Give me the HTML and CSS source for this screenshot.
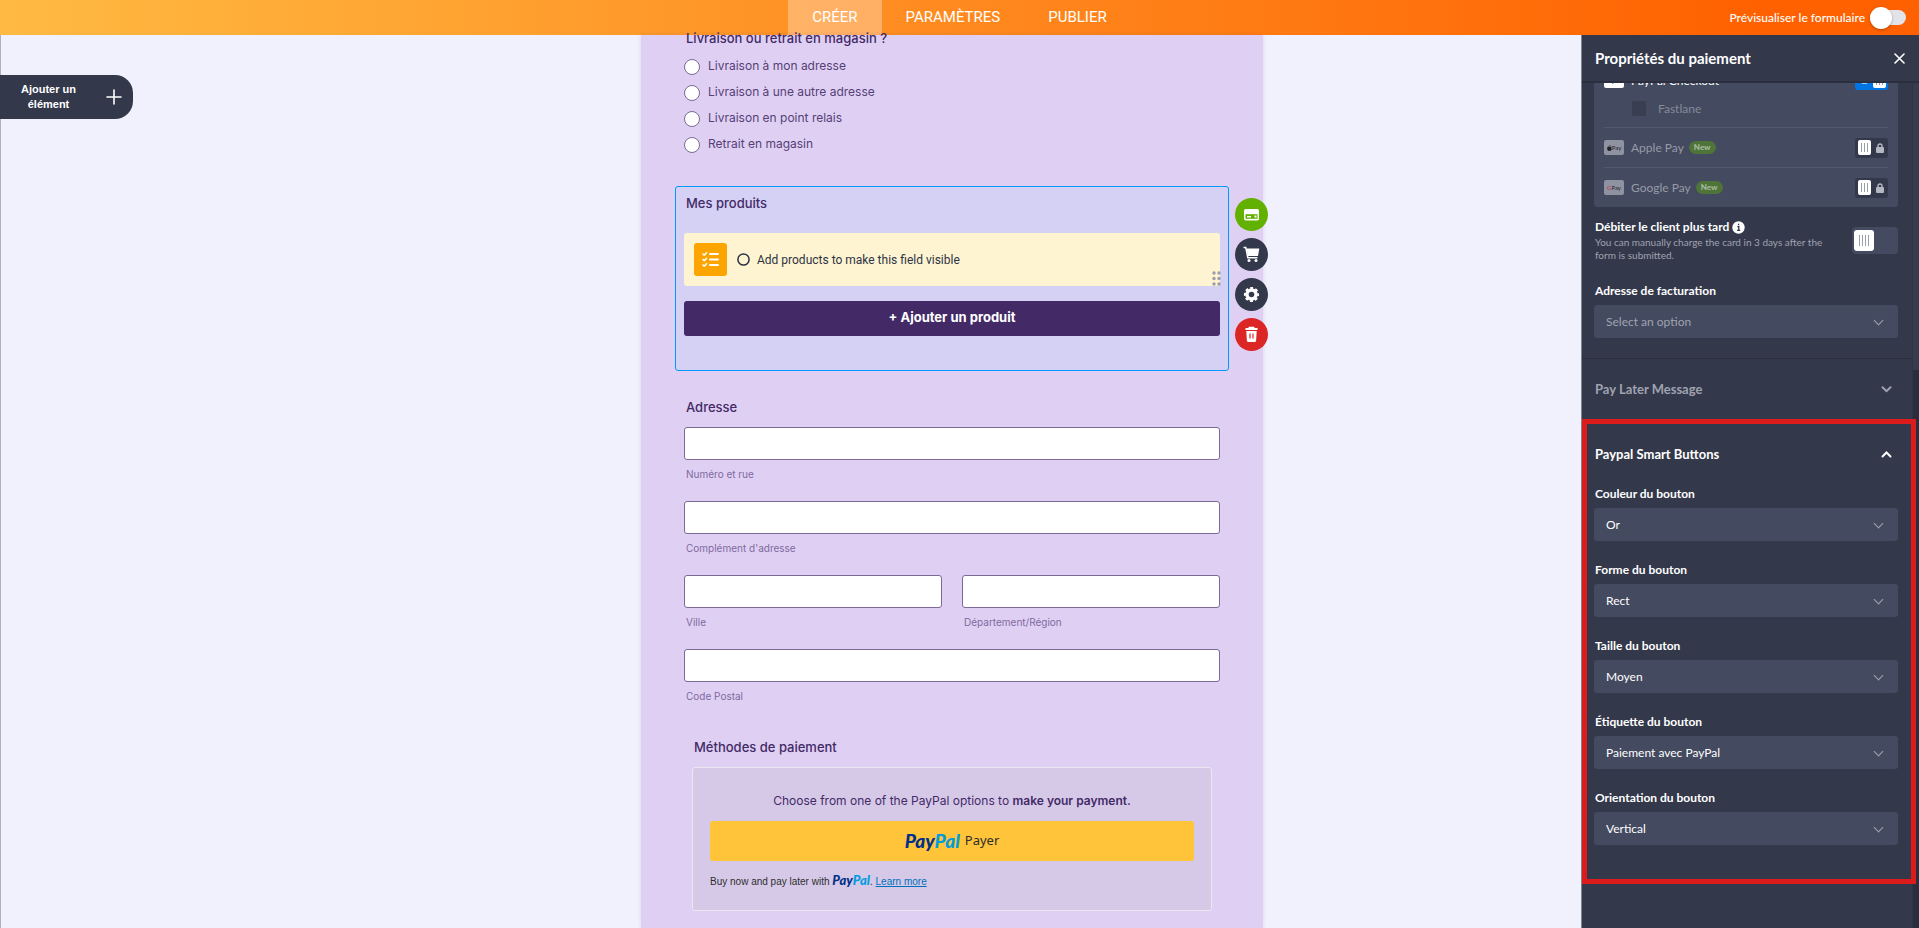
FILE: index.html
```html
<!DOCTYPE html>
<html lang="fr">
<head>
    <meta charset="UTF-8">
    <meta name="viewport" content="width=device-width, initial-scale=1.0">
    <title>Propriétés du paiement</title>
    <link rel="stylesheet" href="styles.css">
</head>
<body>
    <header class="topbar">
        <nav class="tabs">
            <a class="tab active" href="#creer">CRÉER</a>
            <a class="tab" href="#parametres">PARAMÈTRES</a>
            <a class="tab" href="#publier">PUBLIER</a>
        </nav>
        <label class="preview">
            Prévisualiser le formulaire
            <input type="checkbox" class="preview-switch">
        </label>
    </header>

    <main class="workspace">
        <button class="add-element" type="button">
            <span class="add-text">Ajouter un élément</span>
            <svg width="16" height="16" viewBox="0 0 16 16" fill="none" stroke="#fff" stroke-width="1.600" stroke-linecap="round"><path d="M8 1v14M1 8h14"/></svg>
        </button>

        <form class="form">
            <fieldset class="choices">
                <legend class="question">Livraison ou retrait en magasin ?</legend>
                <label class="choice"><input type="radio" name="livraison">Livraison à mon adresse</label>
                <label class="choice"><input type="radio" name="livraison">Livraison à une autre adresse</label>
                <label class="choice"><input type="radio" name="livraison">Livraison en point relais</label>
                <label class="choice"><input type="radio" name="livraison">Retrait en magasin</label>
            </fieldset>

            <!-- Bloc sélectionné -->
            <section class="products">
                <h2 class="question">Mes produits</h2>
                <div class="notice">
                    <span class="notice-icon">
                        <svg width="17" height="17" viewBox="0 0 17 17" fill="none" stroke="#fff" stroke-width="2" stroke-linecap="round" stroke-linejoin="round"><path stroke-width="1.6" d="M1 3l1.200 1.200L4.500 1.800M1 8.500l1.200 1.200L4.500 7.300M1 14l1.200 1.200 2.300-2.400"/><path d="M8 3h8M8 8.500h8M8 14h8"/></svg>
                    </span>
                    <svg width="13" height="13" viewBox="0 0 13 13" fill="none" stroke="#2c3345" stroke-width="1.500"><circle cx="6.500" cy="6.500" r="5.600"/></svg>
                    <span>Add products to make this field visible</span>
                    <svg class="drag" width="9" height="15" viewBox="0 0 9 15" fill="#9c9daa"><circle cx="2" cy="2" r="1.700"/><circle cx="7" cy="2" r="1.700"/><circle cx="2" cy="7.500" r="1.700"/><circle cx="7" cy="7.500" r="1.700"/><circle cx="2" cy="13" r="1.700"/><circle cx="7" cy="13" r="1.700"/></svg>
                </div>
                <button class="add-product" type="button">+ Ajouter un produit</button>
                <div class="actions">
                    <button class="action green" type="button" aria-label="Paiement">
                        <svg width="17" height="17" viewBox="0 0 17 17"><rect x="1" y="3" width="15" height="11.500" rx="1.800" fill="#fff"/><path fill="#62b100" d="M2.500 8.200h12v4.600h-12z"/><path fill="#fff" d="M4 10h4v1.600H4zM11.500 9.500h2v2h-2z"/></svg>
                    </button>
                    <button class="action" type="button" aria-label="Produits">
                        <svg width="17" height="17" viewBox="0 0 17 17"><path d="M.5 1.500h2.300l2 10.200h9.700" fill="none" stroke="#fff" stroke-width="1.500"/><path d="M3.300 2.500h13L15 10H5z" fill="#fff"/><circle cx="6" cy="14.500" r="1.500" fill="#fff"/><circle cx="13" cy="14.500" r="1.500" fill="#fff"/></svg>
                    </button>
                    <button class="action" type="button" aria-label="Réglages">
                        <svg width="17" height="17" viewBox="0 0 17 17" fill="none" stroke="#fff"><circle cx="8.500" cy="8.500" r="4.500" stroke-width="3.400"/><circle cx="8.500" cy="8.500" r="6.600" stroke-width="2" stroke-dasharray="2.900 2.284" stroke-dashoffset="1.450"/></svg>
                    </button>
                    <button class="action red" type="button" aria-label="Supprimer">
                        <svg width="17" height="17" viewBox="0 0 17 17"><path fill="#fff" d="M6 .800h5l.8 1.200H14.500v2h-12V2h2.700zM3.300 5h10.400l-.6 9.800a1.500 1.500 0 0 1-1.500 1.300H5.400a1.500 1.500 0 0 1-1.500-1.300z"/><path d="M7 7.500v5M10 7.500v5" stroke="#dc2626" stroke-width="1.200"/></svg>
                    </button>
                </div>
            </section>

            <section class="address">
                <h2 class="question">Adresse</h2>
                <div class="address-grid">
                    <label class="field wide"><input type="text"><span>Numéro et rue</span></label>
                    <label class="field wide"><input type="text"><span>Complément d'adresse</span></label>
                    <label class="field"><input type="text"><span>Ville</span></label>
                    <label class="field"><input type="text"><span>Département/Région</span></label>
                    <label class="field wide"><input type="text"><span>Code Postal</span></label>
                </div>
            </section>

            <section class="payment">
                <h2 class="question">Méthodes de paiement</h2>
                <div class="payment-box">
                    <p class="payment-hint">Choose from one of the PayPal options to <strong>make your payment.</strong></p>
                    <button class="paypal-button" type="button"><span class="paypal">Pay<span>Pal</span></span> Payer</button>
                    <p class="pay-later">Buy now and pay later with <span class="paypal small">Pay<span>Pal</span></span>. <a href="#learn">Learn more</a></p>
                </div>
            </section>
        </form>

        <aside class="panel">
            <div class="panel-header">
                <h1>Propriétés du paiement</h1>
                <button class="close" type="button" aria-label="Fermer">
                    <svg width="11" height="11" viewBox="0 0 11 11" stroke="#fff" stroke-width="1.600" stroke-linecap="round"><path d="M1 1l9 9M10 1l-9 9"/></svg>
                </button>
            </div>
            <div class="panel-body">
                <div class="panel-content">
                    <div class="general">
                        <div class="methods">
                            <label class="method on">
                                <span class="card-icon"><span class="paypal">Pay<span>Pal</span></span></span>
                                <span class="method-name">PayPal Checkout</span>
                                <input type="checkbox" class="mini-switch" checked>
                            </label>
                            <label class="fastlane"><input type="checkbox" disabled>Fastlane</label>
                            <label class="method">
                                <span class="card-icon">
                                    <svg width="5" height="6" viewBox="0 0 10 12" fill="#22232b"><path d="M7 0c0 1.500-1 2.600-2.300 2.700C4.600 1.300 5.600.2 7 0zM9.500 8.500C9 10 8 11.800 6.900 11.800c-.7 0-1-.4-1.800-.4s-1.200.4-1.800.4C2 11.800.3 9.300.3 6.800c0-2.300 1.400-3.600 2.800-3.600.9 0 1.500.5 2.100.5s1.300-.6 2.400-.6c.7 0 1.500.4 2 1.100-1.900 1.100-1.500 3.600-.1 4.300z"/></svg>Pay
                                </span>
                                <span class="method-name">Apple Pay</span><span class="badge">New</span>
                                <span class="locked">
                                    <i class="knob"></i>
                                    <svg width="8" height="10" viewBox="0 0 8 10"><rect y="4" width="8" height="6" rx="1" fill="#b4b7c2"/><path d="M2 4.500V3a2 2 0 0 1 4 0v1.500" fill="none" stroke="#b4b7c2" stroke-width="1.400"/></svg>
                                </span>
                            </label>
                            <label class="method">
                                <span class="card-icon google"><b>G</b>Pay</span>
                                <span class="method-name">Google Pay</span><span class="badge">New</span>
                                <span class="locked">
                                    <i class="knob"></i>
                                    <svg width="8" height="10" viewBox="0 0 8 10"><rect y="4" width="8" height="6" rx="1" fill="#b4b7c2"/><path d="M2 4.500V3a2 2 0 0 1 4 0v1.500" fill="none" stroke="#b4b7c2" stroke-width="1.400"/></svg>
                                </span>
                            </label>
                        </div>

                        <div class="charge">
                            <div>
                                <label class="prop-label" for="charge-later">Débiter le client plus tard
                                    <svg width="13" height="13" viewBox="0 0 13 13"><circle cx="6.500" cy="6.500" r="6.200" fill="#fff"/><path d="M5.300 5.600h1.500v3.600M5 9.400h3.200M6.600 2.800v1.500" fill="none" stroke="#33384b" stroke-width="1.300"/></svg>
                                </label>
                                <p class="charge-hint">You can manually charge the card in 3 days after the form is submitted.</p>
                            </div>
                            <input type="checkbox" id="charge-later" class="switch">
                        </div>

                        <div class="prop">
                            <label class="prop-label" for="billing">Adresse de facturation</label>
                            <div class="select muted"><select id="billing"><option>Select an option</option></select></div>
                        </div>
                    </div>

                    <button class="section-head later" type="button">Pay Later Message
                        <svg width="11" height="7" viewBox="0 0 11 7" fill="none" stroke="currentColor" stroke-width="2" stroke-linecap="round"><path d="M1.500 1.200l4 4 4-4"/></svg>
                    </button>

                    <section class="smart">
                        <button class="section-head" type="button">Paypal Smart Buttons
                            <svg width="11" height="7" viewBox="0 0 11 7" fill="none" stroke="currentColor" stroke-width="2" stroke-linecap="round"><path d="M1.500 5.500l4-4 4 4"/></svg>
                        </button>
                        <div class="prop">
                            <label class="prop-label" for="color">Couleur du bouton</label>
                            <div class="select"><select id="color"><option>Or</option></select></div>
                        </div>
                        <div class="prop">
                            <label class="prop-label" for="shape">Forme du bouton</label>
                            <div class="select"><select id="shape"><option>Rect</option></select></div>
                        </div>
                        <div class="prop">
                            <label class="prop-label" for="size">Taille du bouton</label>
                            <div class="select"><select id="size"><option>Moyen</option></select></div>
                        </div>
                        <div class="prop">
                            <label class="prop-label" for="tag">Étiquette du bouton</label>
                            <div class="select"><select id="tag"><option>Paiement avec PayPal</option></select></div>
                        </div>
                        <div class="prop">
                            <label class="prop-label" for="layout">Orientation du bouton</label>
                            <div class="select"><select id="layout"><option>Vertical</option></select></div>
                        </div>
                    </section>
                </div>
                <div class="scrollbar"></div>
            </div>
        </aside>
    </main>
</body>
</html>
```
FILE: styles.css
```css
* {
    box-sizing: border-box;
}
body {
    margin: 0;
    height: 100vh;
    display: flex;
    flex-direction: column;
    overflow: hidden;
    font-family: Inter, "Liberation Sans", sans-serif;
    font-size: 12px;
    color: #432a67;
}
h1, h2, p, fieldset {
    margin: 0;
    padding: 0;
    border: 0;
}
button, input, select {
    font: inherit;
    margin: 0;
}
button {
    border: 0;
    cursor: pointer;
}

/* Barre du haut */
.topbar {
    height: 35px;
    flex: none;
    display: grid;
    grid-template-columns: 1fr auto 1fr;
    background: linear-gradient(90deg, #ffba43, #ff6100 92%);
}
.tabs {
    grid-column: 2;
    display: flex;
}
.tab {
    padding: 0 24px;
    line-height: 34px;
    font-family: Roboto, sans-serif;
    font-size: 15px;
    color: #fff;
    text-decoration: none;
}
.tab.active {
    background: rgba(255, 255, 255, 0.3);
}
.preview {
    justify-self: end;
    display: flex;
    align-items: center;
    gap: 5px;
    padding-right: 13px;
    font-family: Lato, sans-serif;
    font-weight: 500;
    font-size: 12px;
    color: #fff;
}
.preview-switch {
    appearance: none;
    display: flex;
    align-items: center;
    width: 36px;
    height: 15px;
    border-radius: 8px;
    background: #e3e3ea;
}
.preview-switch::before {
    content: "";
    width: 22px;
    height: 22px;
    flex: none;
    border-radius: 50%;
    background: #fff;
    box-shadow: 0 1px 3px rgba(0, 0, 0, 0.3);
}

/* Zone de travail */
.workspace {
    flex: 1;
    min-height: 0;
    display: grid;
    grid-template-columns: 1fr 622px 1fr 16px;
    grid-template-rows: 100%;
    background: #f1f0fd;
    border-left: 1px solid #b0afbd;
}
.add-element {
    align-self: start;
    justify-self: start;
    display: flex;
    align-items: center;
    gap: 20px;
    width: 133px;
    height: 44px;
    margin: 40px 0 0 -1px;
    padding: 0 11px;
    border-radius: 0 18px 18px 0;
    background: #33384b;
    color: #fff;
}
.add-text {
    flex: 1;
    font-family: "Liberation Sans", sans-serif;
    font-weight: bold;
    font-size: 11px;
    line-height: 15px;
}

/* Formulaire */
.form {
    padding: 0 43px;
    background: #dfd0f3;
    box-shadow: 0 0 4px rgba(67, 42, 103, 0.12);
}
.question {
    padding: 0 2px;
    font-size: 13px;
    font-weight: 500;
    line-height: 20px;
}
.choices {
    margin-top: -7px;
}
.choices .question {
    margin-bottom: 6px;
}
.choice {
    display: flex;
    gap: 8px;
    height: 26px;
    line-height: 24px;
    color: #553f76;
}
.choice input {
    appearance: none;
    width: 16px;
    height: 16px;
    margin-top: 5px;
    border: 1px solid #7b6a96;
    border-radius: 50%;
    background: #fff;
}
.products {
    position: relative;
    margin: 28px -9px 0;
    padding: 6px 8px 34px;
    border: 1px solid #0099ff;
    border-radius: 3px;
    background: #d5d1f5;
}
.notice {
    position: relative;
    display: flex;
    align-items: center;
    gap: 7px;
    height: 53px;
    margin: 20px 0 15px;
    padding: 0 10px;
    border-radius: 3px;
    background: #fff4d1;
    color: #2c3345;
    font-family: Roboto, sans-serif;
}
.notice-icon {
    display: grid;
    place-items: center;
    width: 33px;
    height: 33px;
    margin-right: 3px;
    border-radius: 3px;
    background: #fca500;
}
.drag {
    position: absolute;
    right: -1px;
    bottom: 0;
}
.add-product {
    display: block;
    width: 100%;
    height: 35px;
    padding-bottom: 4px;
    border-radius: 3px;
    background: #432a67;
    color: #fff;
    font-weight: 700;
    font-size: 13px;
}
.actions {
    position: absolute;
    top: 11px;
    right: -40px;
    display: grid;
    gap: 7px;
}
.action {
    display: grid;
    place-items: center;
    width: 33px;
    height: 33px;
    padding: 0;
    border-radius: 50%;
    background: #33384b;
}
.action.green {
    background: #62b100;
}
.action.red {
    background: #dc2626;
}
.address {
    margin-top: 26px;
}
.address-grid {
    display: grid;
    grid-template-columns: 1fr 1fr;
    gap: 20px;
    margin-top: 10px;
}
.field {
    font-size: 10px;
    line-height: 14px;
    color: #8069a0;
}
.field.wide {
    grid-column: span 2;
}
.field span {
    padding-left: 2px;
}
.field input {
    display: block;
    width: 100%;
    height: 33px;
    margin-bottom: 7px;
    border: 1px solid #7b6a96;
    border-radius: 3px;
    background: #fff;
}
.payment {
    margin: 34px 8px 0;
}
.payment-box {
    margin-top: 10px;
    padding: 23px 17px 21px;
    border: 1px solid #ebe7f1;
    border-radius: 3px;
    background: #d6c9e8;
}
.payment-hint {
    line-height: 20px;
    text-align: center;
}
.payment-hint strong {
    font-weight: 600;
}
.paypal {
    font-family: Lato, sans-serif;
    font-weight: 900;
    font-style: italic;
    font-size: 19px;
    color: #003087;
}
.paypal span {
    color: #009cde;
}
.paypal.small {
    font-size: 13px;
}
.paypal-button {
    display: flex;
    align-items: center;
    justify-content: center;
    gap: 5px;
    width: 100%;
    height: 40px;
    margin: 10px 0 12px;
    padding-bottom: 3px;
    border-radius: 3px;
    background: #ffc439;
    color: #2c2e2f;
    font-family: "Noto Sans", sans-serif;
    font-size: 13px;
}
.pay-later {
    font-family: "Liberation Sans", sans-serif;
    font-size: 10px;
    line-height: 14px;
    color: #2c2e2f;
}
.pay-later a {
    color: #0070ba;
}

/* Panneau des propriétés */
.panel {
    grid-column: 3 / 5;
    justify-self: end;
    width: 338px;
    display: flex;
    flex-direction: column;
    border-left: 1px solid #80828f;
    background: #33384b;
    color: #fff;
    font-family: Lato, "Liberation Sans", sans-serif;
}
.panel-header {
    display: flex;
    align-items: center;
    justify-content: space-between;
    height: 48px;
    flex: none;
    padding: 0 14px 0 13px;
    border-bottom: 2px solid #2a2e3f;
}
.panel-header h1 {
    font-size: 15px;
    font-weight: bold;
}
.close {
    display: flex;
    padding: 0;
    background: none;
}
.panel-body {
    flex: 1;
    min-height: 0;
    display: flex;
    overflow: hidden;
}
.panel-content {
    flex: 1;
}
.scrollbar {
    width: 7px;
    background: linear-gradient(#373b4e 287px, #2a2d3c 287px);
    border-left: 1px solid #2f3346;
}
.general {
    margin-top: -23px;
    padding: 0 14px 20px 12px;
    border-bottom: 1px solid #2a2e3f;
}
.methods {
    padding: 0 10px;
    border-radius: 3px;
    background: #444a5f;
}
.method {
    display: flex;
    align-items: center;
    height: 40px;
    border-top: 1px solid #505a70;
    color: #959aa8;
}
.method.on {
    height: 30px;
    padding-top: 10px;
    border: 0;
    color: #fff;
}
.card-icon {
    display: flex;
    align-items: center;
    justify-content: center;
    width: 20px;
    height: 15px;
    margin-right: 7px;
    border-radius: 2px;
    background: #8f93a1;
    color: #22232b;
    font-size: 6px;
}
.on .card-icon {
    background: #fff;
}
.card-icon .paypal {
    font-size: 6px;
}
.google b {
    color: #b0505c;
}
.badge {
    margin-left: 5px;
    padding: 0 5px;
    border-radius: 7px;
    background: #4e7439;
    color: #a7ba9f;
    font-size: 8px;
    font-weight: 900;
    line-height: 13px;
}
.mini-switch {
    appearance: none;
    display: flex;
    align-items: center;
    justify-content: flex-end;
    width: 33px;
    height: 20px;
    margin-left: auto;
    padding: 2px;
    border-radius: 3px;
    background: #0075e3;
}
.mini-switch::before {
    content: "";
    width: 7px;
    height: 8px;
    margin-right: 5px;
    border-radius: 2px;
    background: #9cc8f4;
}
.mini-switch::after,
.knob {
    content: "";
    width: 13px;
    height: 15px;
    border-radius: 2px;
    background: repeating-linear-gradient(90deg, #9a9dab 0 1px, transparent 1px 3px) 3px 3px / 7px 9px no-repeat #fff;
}
.locked {
    display: flex;
    align-items: center;
    gap: 5px;
    width: 33px;
    height: 20px;
    margin-left: auto;
    padding-left: 3px;
    border-radius: 3px;
    background: #33384b;
}
.fastlane {
    display: flex;
    align-items: center;
    gap: 12px;
    height: 37px;
    padding: 0 0 1px 28px;
    color: #858a9b;
}
.fastlane input {
    appearance: none;
    width: 14px;
    height: 15px;
    border-radius: 2px;
    background: #393e51;
}
.charge {
    display: flex;
    justify-content: space-between;
    align-items: center;
    gap: 12px;
    margin: 12px 0 21px;
}
.prop-label {
    display: flex;
    align-items: center;
    gap: 3px;
    padding-left: 1px;
    font-size: 12px;
    font-weight: bold;
    line-height: 16px;
}
.charge-hint {
    margin-top: 1px;
    padding-left: 1px;
    font-size: 10px;
    line-height: 13px;
    color: #a0a3b0;
}
.switch {
    appearance: none;
    display: flex;
    align-items: center;
    flex: none;
    width: 46px;
    height: 27px;
    padding: 0 2px;
    border-radius: 4px;
    background: #444a5f;
}
.switch::before {
    content: "";
    width: 20px;
    height: 21px;
    border-radius: 3px;
    background: repeating-linear-gradient(90deg, #9a9dab 0 1px, transparent 1px 3px) 5px 5px / 10px 11px no-repeat #fff;
}
.select {
    display: grid;
    align-items: center;
    margin-top: 6px;
    border-radius: 3px;
    background: #444a5f;
}
.select select {
    grid-area: 1 / 1;
    appearance: none;
    width: 100%;
    height: 33px;
    padding: 0 12px;
    border: 0;
    background: none;
    color: #fff;
}
.select::after {
    content: "";
    grid-area: 1 / 1;
    justify-self: end;
    width: 6px;
    height: 6px;
    margin: 0 16px 3px 0;
    border: solid #a0a3b0;
    border-width: 0 1px 1px 0;
    transform: rotate(45deg);
    pointer-events: none;
}
.select.muted select {
    color: #a0a3b0;
}
.section-head {
    display: flex;
    align-items: center;
    justify-content: space-between;
    width: 100%;
    height: 20px;
    padding: 0 6px 0 1px;
    background: none;
    color: #fff;
    font-size: 13px;
    font-weight: bold;
}
.section-head.later {
    height: 60px;
    padding: 0 20px 0 13px;
    color: #a0a3b0;
}
.smart {
    position: relative;
    margin-right: -4px;
    padding: 20px 13px 34px 7px;
    border: 5px solid #dc1c1c;
}
.smart .section-head {
    margin-bottom: 22px;
}
.smart .prop + .prop {
    margin-top: 21px;
}
```
